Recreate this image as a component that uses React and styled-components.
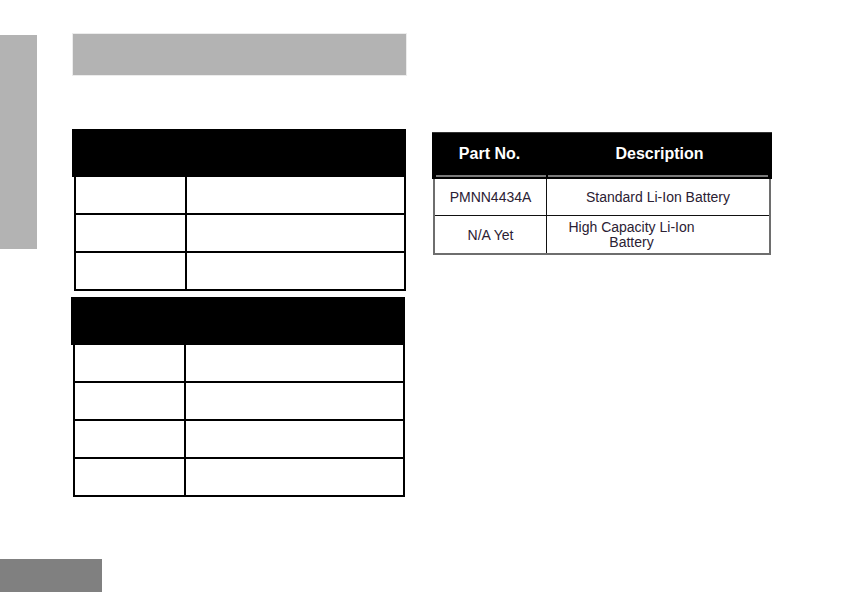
import React from 'react'
import styled, { createGlobalStyle } from 'styled-components'

const GlobalStyle = createGlobalStyle`
  html, body {
    margin: 0;
    padding: 0;
    background: #fff;
  }
  body {
    font-family: "Liberation Sans", Arial, sans-serif;
  }
`

const blankTables = [3, 4]

const parts = [
  { no: 'PMNN4434A', desc: 'Standard Li-Ion Battery' },
  { no: 'N/A Yet', desc: 'High Capacity Li-Ion Battery', narrow: true },
]

const App = () => {
  return (
    <Page>
      <GlobalStyle />
      <Main>
        <SideTab />
        <LeftColumn>
          <TitleBar />
          {blankTables.map((rows, t) => (
            <BlankTable key={t} $first={t === 0}>
              <BlankHeader />
              <BlankBody>
                {Array.from({ length: rows }).map((_, i) => (
                  <BlankRow key={i}>
                    <BlankCell />
                    <BlankCell />
                  </BlankRow>
                ))}
              </BlankBody>
            </BlankTable>
          ))}
        </LeftColumn>
        <RightColumn>
          <PartsTable>
            <PartsHeader>
              <HeadCell $side="left">Part No.</HeadCell>
              <HeadCell $side="right">Description</HeadCell>
            </PartsHeader>
            <PartsBody>
              {parts.map((p, i) => (
                <PartsRow key={p.no} $last={i === parts.length - 1}>
                  <PartCell>{p.no}</PartCell>
                  <DescCell $narrow={p.narrow}>{p.desc}</DescCell>
                </PartsRow>
              ))}
            </PartsBody>
          </PartsTable>
        </RightColumn>
      </Main>
      <Footer>
        <FooterTab />
      </Footer>
    </Page>
  )
}

const Page = styled.div`
  width: 848px;
  height: 592px;
  display: flex;
  flex-direction: column;
  overflow: hidden;
`

const Main = styled.div`
  display: flex;
  align-items: flex-start;
`

const SideTab = styled.div`
  width: 37px;
  height: 214px;
  margin-top: 35px;
  background: #b3b3b3;
`

const LeftColumn = styled.div`
  width: 335px;
  margin-left: 34px;
  padding-top: 34px;
  display: flex;
  flex-direction: column;
`

const TitleBar = styled.div`
  width: 333px;
  height: 41px;
  margin-left: 2px;
  background: #b3b3b3;
  box-shadow: 0 0 0 1px #ececec;
`

const BlankTable = styled.div`
  width: 334px;
  margin-top: ${(p) => (p.$first ? '54px' : '6px')};
  margin-left: ${(p) => (p.$first ? '1px' : '0')};
`

const BlankHeader = styled.div`
  height: 48px;
  background: #000;
`

const BlankBody = styled.div`
  width: 332px;
  margin-left: 2px;
  box-sizing: border-box;
  border: 2px solid #000;
  border-top: none;
`

const BlankRow = styled.div`
  display: grid;
  grid-template-columns: 109px 1fr;
  height: 36px;
  border-bottom: 2px solid #000;
  &:last-child {
    border-bottom: none;
  }
`

const BlankCell = styled.div`
  & + & {
    border-left: 2px solid #000;
  }
`

const RightColumn = styled.div`
  margin-left: 26px;
  margin-top: 132px;
`

const PartsTable = styled.div`
  width: 340px;
  color: #2b2133;
`

const PartsHeader = styled.div`
  display: grid;
  grid-template-columns: 115px 1fr;
  height: 47px;
  background: #000;
  border-top: 1px solid #333;
  box-sizing: border-box;
`

const HeadCell = styled.div`
  position: relative;
  display: flex;
  align-items: center;
  justify-content: center;
  padding-bottom: 5px;
  color: #fff;
  font-weight: bold;
  font-size: 16px;
  &::after {
    content: '';
    position: absolute;
    bottom: 2px;
    height: 2px;
    left: ${(p) => (p.$side === 'left' ? '4px' : '1px')};
    right: ${(p) => (p.$side === 'left' ? '1px' : '4px')};
    background: #7a7a7a;
  }
`

const PartsBody = styled.div`
  width: 338px;
  margin-left: 1px;
  box-sizing: border-box;
  border: 2px solid #6e6e6e;
  border-top: none;
`

const PartsRow = styled.div`
  display: grid;
  grid-template-columns: 111px 1fr;
  height: ${(p) => (p.$last ? '37px' : '36px')};
  border-bottom: ${(p) => (p.$last ? 'none' : '1px solid #111')};
  font-size: 14px;
`

const PartCell = styled.div`
  display: flex;
  align-items: center;
  justify-content: center;
`

const DescCell = styled.div`
  display: flex;
  align-items: center;
  justify-content: center;
  text-align: center;
  line-height: 15px;
  border-left: 1px solid #111;
  padding: ${(p) => (p.$narrow ? '0 63px 0 10px' : '0')};
`

const Footer = styled.div`
  margin-top: auto;
`

const FooterTab = styled.div`
  width: 102px;
  height: 33px;
  background: #808080;
`

export default App
